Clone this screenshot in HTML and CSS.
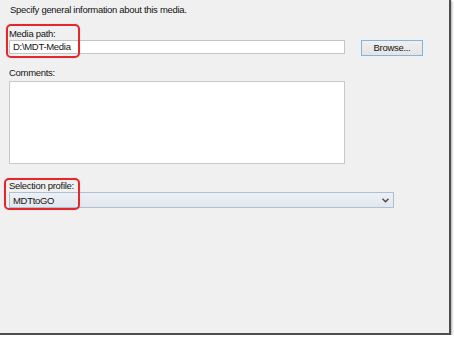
FILE: index.html
```html
<!DOCTYPE html>
<html>
<head>
<meta charset="utf-8">
<link rel="stylesheet" href="styles.css">
</head>
<body>
<div class="frame">
  <div class="header">Specify general information about this media.</div>
  <div class="form">
    <div class="label">Media path:</div>
    <div class="row">
      <div class="input">D:\MDT-Media</div>
      <div class="button">Browse...</div>
    </div>
    <div class="label comments-label">Comments:</div>
    <div class="textarea"></div>
    <div class="label profile-label">Selection profile:</div>
    <div class="select">
      <span>MDTtoGO</span>
      <svg class="chev" width="7" height="5" viewBox="0 0 7 5"><path d="M0.5 0.8 L3.5 3.8 L6.5 0.8" fill="none" stroke="#444" stroke-width="1.3"/></svg>
    </div>
  </div>
  <div class="mark mark-path"></div>
  <div class="mark mark-profile"></div>
</div>
</body>
</html>
```

FILE: styles.css
```css
html, body {
  margin: 0;
  padding: 0;
  background: #ffffff;
}
body {
  font-family: "Liberation Sans", Arial, sans-serif;
  font-size: 9.5px;
  letter-spacing: -0.3px;
  color: #141414;
}
.frame {
  position: relative;
  width: 449px;
  height: 333px;
  background: #f0f0f0;
  border-right: 2px solid #4d4d4d;
  border-bottom: 2px solid #4d4d4d;
  box-shadow: 1px 1px 2px rgba(0,0,0,0.35);
}
.header {
  padding: 4px 0 0 10px;
  line-height: 12px;
}
.form {
  padding-left: 9px;
}
.label {
  line-height: 12px;
  margin-top: 12px;
}
.row {
  display: flex;
  align-items: flex-start;
  gap: 16px;
}
.input {
  box-sizing: border-box;
  width: 336px;
  height: 14px;
  background: #fff;
  border: 1px solid #c4c4c4;
  padding-left: 3px;
  line-height: 12px;
}
.button {
  box-sizing: border-box;
  width: 62px;
  height: 16px;
  background: linear-gradient(#f0f0f0, #e4e4e4);
  border: 1px solid #86b3db;
  text-align: center;
  line-height: 14px;
}
.comments-label {
  margin-top: 11px;
}
.textarea {
  box-sizing: border-box;
  width: 336px;
  height: 83px;
  margin-top: 2px;
  background: #fff;
  border: 1px solid #c8c8c8;
}
.profile-label {
  margin-top: 16px;
}
.select {
  box-sizing: border-box;
  width: 385px;
  height: 16px;
  background: linear-gradient(#edf0f4, #e2e7ed);
  border: 1px solid #aebfd2;
  display: flex;
  align-items: center;
  justify-content: space-between;
  padding: 0 4px 0 3px;
}
.chev {
  display: block;
}
.mark {
  position: absolute;
  border: 2px solid #e2282c;
  border-radius: 5px;
  box-shadow: 0 0 1px rgba(226,40,44,0.4);
}
.mark-path {
  left: 6px;
  top: 24px;
  width: 70px;
  height: 30px;
}
.mark-profile {
  left: 4px;
  top: 178px;
  width: 72px;
  height: 28px;
}
```
